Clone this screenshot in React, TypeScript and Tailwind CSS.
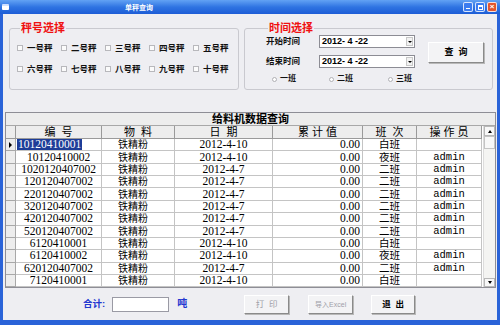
import React from "react";

const cjk = "font-['Liberation_Sans','Noto_Sans_CJK_SC',sans-serif]";

const rows: [string, string, string, string][] = [
  ["10120410001", "2012-4-10", "白班", ""],
  ["10120410002", "2012-4-10", "夜班", "admin"],
  ["1020120407002", "2012-4-7", "二班", "admin"],
  ["120120407002", "2012-4-7", "二班", "admin"],
  ["220120407002", "2012-4-7", "二班", "admin"],
  ["320120407002", "2012-4-7", "二班", "admin"],
  ["420120407002", "2012-4-7", "二班", "admin"],
  ["520120407002", "2012-4-7", "二班", "admin"],
  ["6120410001", "2012-4-10", "白班", ""],
  ["6120410002", "2012-4-10", "夜班", "admin"],
  ["620120407002", "2012-4-7", "二班", "admin"],
  ["7120410001", "2012-4-10", "白班", ""],
];

const cols = "grid grid-cols-[10px_86px_73px_98px_90px_54px_65px]";

function TitleBar() {
  return (
    <div className="h-[14px] flex items-center bg-gradient-to-b from-[#62a2f4] via-[#2f74e2] to-[#1d5cd6] pl-[2px] pr-[3px]">
      <div className="w-[7px] h-[6px] bg-white rounded-[1px] border-t-2 border-[#cfe0ff]" />
      <span className={`ml-[116px] text-[7px] leading-none font-bold text-white ${cjk}`}>单秤查询</span>
      <div className="flex-1" />
      <div className="flex gap-[2px]">
        <div className="w-[10px] h-[10px] rounded-[2px] border border-white/80 bg-[#3b7cf0] flex items-end justify-center pb-[2px]">
          <div className="w-[4px] h-[1.5px] bg-white" />
        </div>
        <div className="w-[10px] h-[10px] rounded-[2px] border border-white/80 bg-[#3b7cf0] flex items-center justify-center">
          <div className="w-[5px] h-[5px] border border-white border-t-2" />
        </div>
        <div className="w-[10px] h-[10px] rounded-[2px] border border-white/80 bg-[#e2552d] flex items-center justify-center text-white text-[8px] leading-none font-bold font-['Liberation_Sans',sans-serif]">
          ×
        </div>
      </div>
    </div>
  );
}

function Check({ label }: { label: string }) {
  return (
    <div className="flex items-center gap-[4px] h-[12px]">
      <span className="w-[6px] h-[6px] border border-[#b8b8bc] bg-[#fbfbfb]" />
      <span className={`text-[8.5px] leading-none font-bold text-[#111] ${cjk}`}>{label}</span>
    </div>
  );
}

function Radio({ label, w }: { label: string; w: string }) {
  return (
    <div className={`flex items-center gap-[3px] ${w}`}>
      <span className="w-[5px] h-[5px] rounded-full border border-[#b0b0b4] bg-white" />
      <span className={`text-[8px] leading-none font-bold text-[#111] ${cjk}`}>{label}</span>
    </div>
  );
}

function DateBox() {
  return (
    <div className="w-[96px] h-[13px] bg-white border border-[#8c8c94] flex items-center pl-[2px] pr-[1px]">
      <span className="flex-1 text-[9px] leading-none font-bold text-black font-['Liberation_Sans',sans-serif] whitespace-pre">
        2012- 4 -22
      </span>
      <span className="w-[7px] h-[9px] bg-[#f2f2f2] border border-[#c8c8c8] flex items-center justify-center">
        <span className="w-0 h-0 border-l-[2px] border-r-[2px] border-t-[2px] border-l-transparent border-r-transparent border-t-black" />
      </span>
    </div>
  );
}

function Btn({ label, disabled, className }: { label: string; disabled?: boolean; className: string }) {
  return (
    <div
      className={`shrink-0 flex items-center justify-center bg-[#f3f3f5] border border-t-white border-l-white border-r-[#8a8a8a] border-b-[#8a8a8a] shadow-[1px_1px_0_#b8b8b8] ${className}`}
    >
      <span
        className={`leading-none whitespace-pre ${cjk} ${disabled ? "text-[#a0a0a8] font-normal" : "text-black font-bold"}`}
      >
        {label}
      </span>
    </div>
  );
}

export default function App() {
  return (
    <div className="w-[500px] h-[325px] flex flex-col bg-[#2a63d8] overflow-hidden">
      <TitleBar />
      <div className="flex-1 min-h-0 mx-[3px] mb-[5px] bg-[#eeeef2] flex flex-col">
        {/* group boxes */}
        <div className="flex gap-[5px] pl-[6px] pt-[7px]">
          <fieldset className="w-[230px] h-[69px] border border-[#c9c9cf] rounded-[3px] pl-[7px]">
            <legend className={`ml-[3px] px-[1px] text-[11px] leading-[14px] font-bold text-[#f01010] ${cjk}`}>
              秤号选择
            </legend>
            <div className="grid grid-cols-[44px_44px_44px_44px_44px] gap-y-[9px] pt-[7px]">
              {["一号秤", "二号秤", "三号秤", "四号秤", "五号秤", "六号秤", "七号秤", "八号秤", "九号秤", "十号秤"].map(
                (l) => (
                  <Check key={l} label={l} />
                )
              )}
            </div>
          </fieldset>
          <fieldset className="w-[249px] h-[69px] border border-[#c9c9cf] rounded-[3px] pl-[21px]">
            <legend className={`ml-[2px] px-[1px] text-[11px] leading-[14px] font-bold text-[#f01010] ${cjk}`}>
              时间选择
            </legend>
            <div className="flex">
              <div className="w-[149px] shrink-0 flex flex-col">
                <div className="flex items-center h-[13px]">
                  <span className={`w-[53px] text-[8.5px] leading-none font-bold text-[#111] ${cjk}`}>开始时间</span>
                  <DateBox />
                </div>
                <div className="flex items-center h-[13px] mt-[7px]">
                  <span className={`w-[53px] text-[8.5px] leading-none font-bold text-[#111] ${cjk}`}>结束时间</span>
                  <DateBox />
                </div>
                <div className="flex items-center h-[10px] mt-[6px] pl-[6px]">
                  <Radio label="一班" w="w-[57px]" />
                  <Radio label="二班" w="w-[59px]" />
                  <Radio label="三班" w="w-[27px]" />
                </div>
              </div>
              <Btn label="查  询" className="ml-[13px] mt-[7px] w-[56px] h-[21px] text-[9px]" />
            </div>
          </fieldset>
        </div>

        {/* data grid */}
        <div className="mt-[22px] ml-[2px] mr-[1px] h-[176px] border border-[#8e8e96] bg-white flex flex-col">
          <div className="h-[13px] bg-[#ededed] border-b border-[#a8a8a8] flex items-center justify-center">
            <span className={`text-[11px] leading-none font-bold text-black ${cjk}`}>给料机数据查询</span>
          </div>
          <div className="flex-1 min-h-0 flex">
            <div className="flex-1 min-w-0 overflow-hidden">
              <div className={`${cols} h-[13px]`}>
                {["", "编  号", "物  料", "日  期", "累 计 值", "班  次", "操 作 员"].map((h, i) => (
                  <div
                    key={i}
                    className={`bg-[#ededed] border-r border-b border-[#9a9a9a] flex items-center justify-center text-[11px] leading-none text-black whitespace-pre ${cjk}`}
                  >
                    {h}
                  </div>
                ))}
              </div>
              {rows.map((r, i) => (
                <div key={i} className={`${cols} h-[12.36px] text-[11.5px] leading-[11px] text-black font-['Liberation_Serif',serif]`}>
                  <div className="bg-[#ededed] border-r border-b border-[#a8a8a8] flex items-center justify-center">
                    {i === 0 && (
                      <span className="w-0 h-0 border-t-[3px] border-b-[3px] border-l-[3px] border-t-transparent border-b-transparent border-l-black" />
                    )}
                  </div>
                  <div className="border-r border-b border-[#c4c4c4] flex items-center justify-center">
                    {i === 0 ? (
                      <span className="mr-auto ml-px bg-[#1d3d98] text-white px-[1px]">{r[0]}</span>
                    ) : (
                      r[0]
                    )}
                  </div>
                  <div className={`border-r border-b border-[#c4c4c4] flex items-center justify-center pr-[10px] text-[10px] ${cjk}`}>
                    铁精粉
                  </div>
                  <div className="border-r border-b border-[#c4c4c4] flex items-center justify-center">{r[1]}</div>
                  <div className="border-r border-b border-[#c4c4c4] flex items-center justify-end pr-[2px]">0.00</div>
                  <div className={`border-r border-b border-[#c4c4c4] flex items-center justify-center text-[10.5px] ${cjk}`}>
                    {r[2]}
                  </div>
                  <div className="border-r border-b border-[#c4c4c4] flex items-center justify-center text-[10.5px] font-['Liberation_Mono',monospace]">
                    {r[3]}
                  </div>
                </div>
              ))}
            </div>
            {/* scrollbar */}
            <div className="w-[12px] bg-[#f4f4f2] border-l border-[#dcdcdc] flex flex-col">
              <div className="h-[10px] bg-[#f8f8f8] border border-[#b8b8b8] flex items-center justify-center">
                <span className="w-0 h-0 border-l-[2px] border-r-[2px] border-b-[3px] border-l-transparent border-r-transparent border-b-black" />
              </div>
              <div className="h-[13px] bg-[#f8f8f8] border border-[#c4c4c4]" />
              <div className="flex-1" />
              <div className="h-[9px] bg-[#f8f8f8] border border-[#b8b8b8] flex items-center justify-center">
                <span className="w-0 h-0 border-l-[2px] border-r-[2px] border-t-[3px] border-l-transparent border-r-transparent border-t-black" />
              </div>
            </div>
          </div>
        </div>

        {/* bottom bar */}
        <div className="flex-1 flex items-center pl-[80px]">
          <span className={`text-[9.5px] leading-none font-bold text-[#2236d0] ${cjk}`}>合计:</span>
          <div className="ml-[7px] w-[57px] h-[15px] bg-white border border-[#9a9aa4]" />
          <span className={`ml-[8px] text-[10px] leading-none font-bold text-[#2236d0] ${cjk}`}>吨</span>
          <Btn label="打  印" disabled className="ml-[57px] w-[45px] h-[19px] text-[8.5px]" />
          <Btn label="导入Excel" disabled className="ml-[19px] w-[45px] h-[19px] text-[7px]" />
          <Btn label="退  出" className="ml-[18px] w-[44px] h-[19px] text-[8.5px]" />
        </div>
      </div>
    </div>
  );
}
